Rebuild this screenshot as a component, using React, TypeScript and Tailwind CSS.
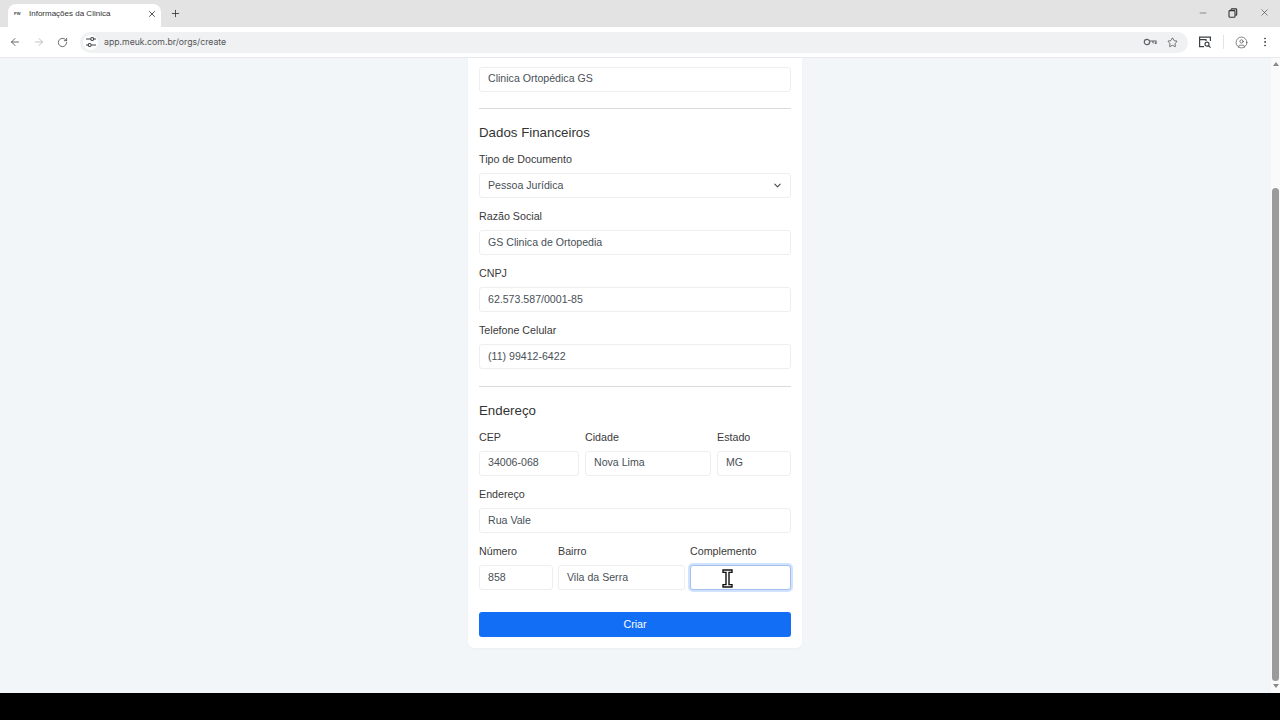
import React from 'react';
import { ArrowLeft, ArrowRight, ChevronDown, CircleUser, EllipsisVertical, Minus, Plus, RotateCw, Star, X } from 'lucide-react';

function TuneIcon() {
  return (
    <svg width="12" height="12" viewBox="0 0 12 12" fill="none" stroke="#3c4043" strokeWidth="1.1">
      <path d="M1 3h4.5M9 3h2M1 9h2M6.5 9H11" />
      <circle cx="7.2" cy="3" r="1.5" />
      <circle cx="4.7" cy="9" r="1.5" />
    </svg>
  );
}

function KeyIcon() {
  return (
    <svg width="14" height="14" viewBox="0 0 14 14" fill="none" stroke="#5f6368" strokeWidth="1.2">
      <circle cx="4" cy="7" r="2.7" />
      <path d="M6.7 6h6.3v2.3h-1.3M10 8.3V6" />
    </svg>
  );
}

function RestoreIcon() {
  return (
    <svg className="ml-[20px]" width="10" height="10" viewBox="0 0 10 10" fill="none" stroke="#333" strokeWidth="1.1">
      <rect x="1" y="2.6" width="6" height="6.6" rx="0.8" />
      <path d="M3 2.4V1.6c0-.4.3-.7.7-.7h4.1c.5 0 .9.4.9.9v4.6c0 .4-.3.7-.7.7h-.6" />
    </svg>
  );
}

function TabSearchIcon() {
  return (
    <svg width="14" height="14" viewBox="0 0 14 14" fill="none" stroke="#3c4043" strokeWidth="1.2">
      <path d="M6 11.6H1.6V2.2h10.8V6" />
      <path d="M1.6 4.6h6.4V6" />
      <circle cx="9" cy="9.2" r="2" />
      <path d="M10.5 10.7l2 2" />
    </svg>
  );
}

function Field({ label, value, className }: { label: string; value: string; className?: string }) {
  return (
    <div className={className}>
      <label className="block h-[18px] mb-[5px] leading-[18px] text-[10.7px] text-[#3a3a3a]">{label}</label>
      <div className="h-[25px] px-[8px] flex items-center bg-white border border-[#eceef0] rounded-[3px] text-[10.6px] text-[#495057]">
        {value}
      </div>
    </div>
  );
}

export default function App() {
  return (
    <div className="h-screen overflow-hidden flex flex-col bg-black font-['Liberation_Sans',Arial,sans-serif]">
      {/* tab strip */}
      <div className="h-[27px] shrink-0 bg-[#e3e3e3] flex items-end pl-[8px]">
        <div className="w-[153px] h-[23px] pb-[4px] bg-white rounded-t-[8px] flex items-center pl-[6px] pr-[1px]">
          <span className="w-[10px] text-[4px] font-bold text-[#444] leading-none">PW</span>
          <span className="ml-[5px] flex-1 text-[8px] text-[#333]">Informações da Clinica</span>
          <X size={10} strokeWidth={2} color="#333" className="mr-[3px]" />
        </div>
        <Plus size={11} strokeWidth={1.8} color="#333" className="ml-[9px] mb-[8px]" />
        <div className="flex-1" />
        <div className="flex items-center pr-[10px] mb-[9px]">
          <Minus size={10} strokeWidth={1.2} color="#333" />
          <RestoreIcon />
          <X size={11} strokeWidth={1.2} color="#333" className="ml-[21px]" />
        </div>
      </div>

      {/* toolbar */}
      <div className="h-[31px] shrink-0 bg-white border-b border-[#e6e8ee] flex items-center pl-[9px]">
        <ArrowLeft size={12} strokeWidth={1.6} color="#444" />
        <ArrowRight size={12} strokeWidth={1.6} color="#b3b3b3" className="ml-[12px]" />
        <RotateCw size={11} strokeWidth={1.7} color="#444" className="ml-[12px]" />
        <div className="ml-[12px] w-[1108px] h-[21px] rounded-full bg-[#eff1f3] flex items-center pl-[3px]">
          <div className="w-[15px] h-[15px] rounded-full bg-white flex items-center justify-center">
            <TuneIcon />
          </div>
          <span className="ml-[6px] pt-[1px] flex-1 text-[8.7px] text-[#555] font-['Inter',sans-serif]">app.meuk.com.br/orgs/create</span>
          <KeyIcon />
          <Star size={11} strokeWidth={1.6} color="#444" className="ml-[9.5px] mr-[10.5px]" />
        </div>
        <div className="ml-[10px]">
          <TabSearchIcon />
        </div>
        <div className="ml-[11px] w-px h-[14px] bg-[#e3e3e3]" />
        <CircleUser size={13} strokeWidth={1.2} color="#444" className="ml-[11px]" />
        <EllipsisVertical size={12} strokeWidth={2} color="#444" className="ml-[11px]" />
      </div>

      {/* page */}
      <div className="h-[635px] shrink-0 bg-[#f3f6f9] flex relative">
        <div className="flex-1 flex justify-center">
          <div className="ml-[-1px] w-[334px] h-[590px] bg-white rounded-b-[6px] shadow-[0_1px_2px_rgba(0,0,0,0.03)] px-[11px] pt-[9px] pb-[11px]">
            <div className="h-[25px] px-[8px] pb-[2px] flex items-center bg-white border border-[#eceef0] rounded-[3px] text-[10.6px] text-[#495057]">
              Clinica Ortopédica GS
            </div>
            <hr className="mt-4 mb-3 border-0 border-t border-[#d9dbdd]" />
            <h2 className="h-[22px] leading-[24px] mb-[7px] text-[13.3px] text-[#333]">Dados Financeiros</h2>
            <label className="block h-[18px] mb-[5px] leading-[18px] text-[10.7px] text-[#3a3a3a]">Tipo de Documento</label>
            <div className="h-[25px] pl-[8px] pr-[7.5px] mb-[9.2px] flex items-center justify-between bg-white border border-[#eceef0] rounded-[3px] text-[10.6px] text-[#495057]">
              Pessoa Jurídica
              <ChevronDown size={11} strokeWidth={2.2} color="#444" />
            </div>
            <Field label="Razão Social" value="GS Clinica de Ortopedia" className="mb-[9.2px]" />
            <Field label="CNPJ" value="62.573.587/0001-85" className="mb-[9px]" />
            <Field label="Telefone Celular" value="(11) 99412-6422" />
            <hr className="mt-[16.2px] mb-3 border-0 border-t border-[#d9dbdd]" />
            <h2 className="h-[22px] leading-[24px] mb-[7px] text-[13.3px] text-[#333]">Endereço</h2>
            <div className="grid grid-cols-[100px_126px_74px] gap-[6px] mb-[9.6px]">
              <Field label="CEP" value="34006-068" />
              <Field label="Cidade" value="Nova Lima" />
              <Field label="Estado" value="MG" />
            </div>
            <Field label="Endereço" value="Rua Vale" className="mb-[8.8px]" />
            <div className="grid grid-cols-[74px_127px_101px] gap-[5px]">
              <Field label="Número" value="858" />
              <Field label="Bairro" value="Vila da Serra" />
              <div>
                <label className="block h-[18px] mb-[5px] leading-[18px] text-[10.7px] text-[#3a3a3a]">Complemento</label>
                <div className="h-[25px] bg-white border border-[#a3bfea] rounded-[3px] shadow-[0_0_0_2px_rgba(13,110,253,0.2)]" />
              </div>
            </div>
            <button className="mt-[22px] w-full h-[25px] pb-[1px] bg-[#116ef5] rounded-[3px] text-[10.7px] text-white">Criar</button>
          </div>
        </div>

        {/* scrollbar */}
        <div className="w-[9px] shrink-0 bg-[#fafafa] flex flex-col items-center">
          <div className="mt-[4px] w-0 h-0 border-x-[3px] border-x-transparent border-b-[4px] border-b-[#8a8a8a]" />
          <div className="mt-[122px] w-[7px] h-[493px] bg-[#9b9b9b] rounded-full" />
          <div className="mt-[3px] w-0 h-0 border-x-[3px] border-x-transparent border-t-[4px] border-t-[#8a8a8a]" />
        </div>

        {/* mouse cursor */}
        <svg className="absolute left-[722px] top-[511px]" width="11" height="19" viewBox="0 0 11 19" fill="#fff" stroke="#111" strokeWidth="1.4">
          <path d="M1 1h9v2.4H7v12.2h3V18H1v-2.4h3V3.4H1z" />
        </svg>
      </div>
    </div>
  );
}
